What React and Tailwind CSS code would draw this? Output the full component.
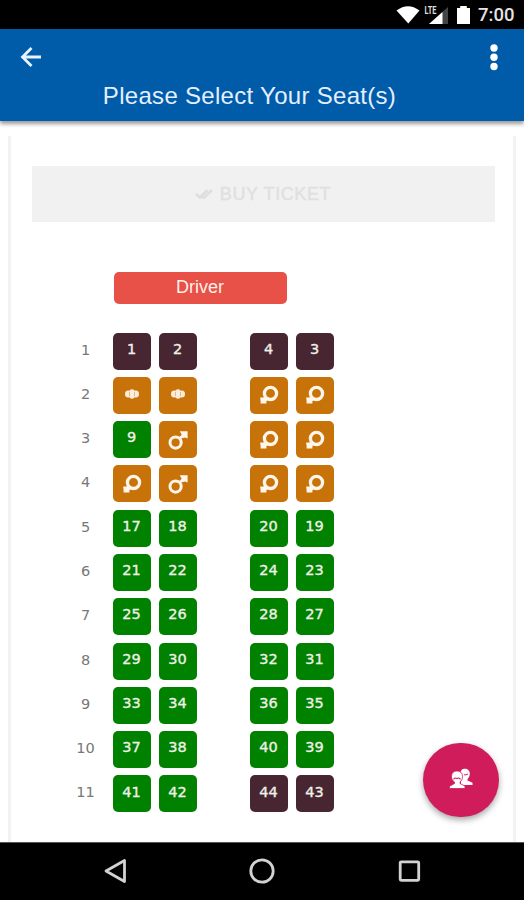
import React from 'react';

const ROWS = [
  { row: 1, seats: [{ label: '1', type: 'blocked' }, { label: '2', type: 'blocked' }, { label: '4', type: 'blocked' }, { label: '3', type: 'blocked' }] },
  { row: 2, seats: [{ icon: 'group', type: 'sold' }, { icon: 'group', type: 'sold' }, { icon: 'female', type: 'sold' }, { icon: 'female', type: 'sold' }] },
  { row: 3, seats: [{ label: '9', type: 'free' }, { icon: 'male', type: 'sold' }, { icon: 'female', type: 'sold' }, { icon: 'female', type: 'sold' }] },
  { row: 4, seats: [{ icon: 'female', type: 'sold' }, { icon: 'male', type: 'sold' }, { icon: 'female', type: 'sold' }, { icon: 'female', type: 'sold' }] },
  { row: 5, seats: [{ label: '17', type: 'free' }, { label: '18', type: 'free' }, { label: '20', type: 'free' }, { label: '19', type: 'free' }] },
  { row: 6, seats: [{ label: '21', type: 'free' }, { label: '22', type: 'free' }, { label: '24', type: 'free' }, { label: '23', type: 'free' }] },
  { row: 7, seats: [{ label: '25', type: 'free' }, { label: '26', type: 'free' }, { label: '28', type: 'free' }, { label: '27', type: 'free' }] },
  { row: 8, seats: [{ label: '29', type: 'free' }, { label: '30', type: 'free' }, { label: '32', type: 'free' }, { label: '31', type: 'free' }] },
  { row: 9, seats: [{ label: '33', type: 'free' }, { label: '34', type: 'free' }, { label: '36', type: 'free' }, { label: '35', type: 'free' }] },
  { row: 10, seats: [{ label: '37', type: 'free' }, { label: '38', type: 'free' }, { label: '40', type: 'free' }, { label: '39', type: 'free' }] },
  { row: 11, seats: [{ label: '41', type: 'free' }, { label: '42', type: 'free' }, { label: '44', type: 'blocked' }, { label: '43', type: 'blocked' }] },
];

const SEAT_COLORS = {
  free: 'bg-[#008100]',
  sold: 'bg-[#c87309]',
  blocked: 'bg-[#472632]',
};

function SeatIcon({ name }) {
  if (name === 'male') {
    return (
      <svg className="w-6 h-6" viewBox="0 0 24 24" fill="none">
        <circle cx="9.6" cy="14.6" r="5.6" stroke="#fff5ea" strokeWidth="3" />
        <path d="M13.4 10.800 17 7.400" stroke="#fff5ea" strokeWidth="2.6" />
        <path d="M13.8 3.2h7.800v7.4l-2.6-1.200-2.800.8-.4-3.200z" fill="#fff5ea" />
      </svg>
    );
  }
  if (name === 'female') {
    return (
      <svg className="w-6 h-6" viewBox="0 0 24 24" fill="none">
        <circle cx="13.5" cy="10.400" r="6.100" stroke="#fff5ea" strokeWidth="3.300" />
        <path d="M3.200 14.600h2.800l3.200-1 1.400 3-1.200 2v1.800H3.600v-2.200z" fill="#fff5ea" />
      </svg>
    );
  }
  return (
    <svg className="w-6 h-6" viewBox="0 0 24 24">
      <g fill="#ffeddb">
        <ellipse cx="8.200" cy="11" rx="3.200" ry="3.500" />
        <ellipse cx="15.800" cy="11" rx="3.200" ry="3.500" />
        <ellipse cx="12" cy="11" rx="3.200" ry="4.800" />
      </g>
      <path d="M9.500 9v4M14.500 9v4" stroke="#dfa765" strokeWidth=".8" />
    </svg>
  );
}

function Seat({ seat }) {
  return (
    <div className={`flex h-[37px] w-[38px] items-center justify-center rounded-[5px] font-['DejaVu_Sans',sans-serif] text-[14.5px] text-[#f0f0e8] ${SEAT_COLORS[seat.type]}`}>
      {seat.icon ? <SeatIcon name={seat.icon} /> : <span className="-mt-[3px] [-webkit-text-stroke:0.35px]">{seat.label}</span>}
    </div>
  );
}

function SeatRow({ row, seats }) {
  return (
    <div className="flex h-[44.3px]">
      <div className="mr-[9px] h-[34px] w-[36px] text-center font-['DejaVu_Sans',sans-serif] text-[14.5px] leading-[34px] text-[#777]">{row}</div>
      <div className="flex gap-[8px]">
        <Seat seat={seats[0]} />
        <Seat seat={seats[1]} />
      </div>
      <div className="ml-[53px] flex gap-[8px]">
        <Seat seat={seats[2]} />
        <Seat seat={seats[3]} />
      </div>
    </div>
  );
}

function StatusBar() {
  return (
    <div className="flex h-[29px] items-center bg-black pl-[396px]">
      <svg className="h-[29px] w-[80px]" viewBox="0 0 80 29">
        <path d="M.5 10.5Q12 2 23.500 10.500L12.300 23.500z" fill="#fff" />
        <path d="M52 7v17H33z" fill="#444" />
        <path d="M46.500 12v12H33z" fill="#fff" />
        <text x="28.500" y="14" fontSize="10" fontWeight="700" textLength="12" lengthAdjust="spacingAndGlyphs" fill="#ddd" fontFamily="Roboto, sans-serif">LTE</text>
        <path d="M61 8h3.200V6h6.600v2H74v16H61z" fill="#fff" />
      </svg>
      <span className="ml-[2px] mt-[2px] font-[Roboto,sans-serif] text-[18.5px] font-medium leading-none text-[#e4e4e4]">7:00</span>
    </div>
  );
}

function Header() {
  return (
    <header className="relative z-10 h-[92px] bg-[#005ba9] shadow-[0_3px_4px_rgba(0,0,0,0.4)]">
      <div className="flex h-[55px] items-center justify-between pl-[20px] pr-[26px]">
        <svg className="h-[22px] w-[22px]" viewBox="0 0 22 22" fill="none" stroke="#e9f3ff" strokeWidth="2.800">
          <path d="M21 11H2.500M11.500 2 2.500 11l9 9" />
        </svg>
        <svg className="h-[28px] w-[8px]" viewBox="0 0 8 28" fill="#fff">
          <circle cx="4" cy="5" r="3.700" />
          <circle cx="4" cy="14.200" r="3.700" />
          <circle cx="4" cy="23.500" r="3.700" />
        </svg>
      </div>
      <h1 className="-mt-[3px] pr-[25px] text-center text-[24px] leading-[30px] tracking-[0.3px] text-[#e4efff]">Please Select Your Seat(s)</h1>
    </header>
  );
}

function NavBar() {
  return (
    <nav className="flex h-[58px] items-center justify-between border-t border-[#555] bg-black pb-[2px] pl-[101px] pr-[101px]">
      <svg className="h-7 w-7" viewBox="0 0 28 28" fill="none" stroke="#d2d2d2" strokeWidth="2.800">
        <path d="M23.500 3.500v21L5 14z" strokeLinejoin="round" />
      </svg>
      <svg className="h-7 w-7" viewBox="0 0 28 28" fill="none" stroke="#d2d2d2" strokeWidth="2.800">
        <circle cx="14" cy="14" r="11.200" />
      </svg>
      <svg className="h-7 w-7" viewBox="0 0 28 28" fill="none" stroke="#d2d2d2" strokeWidth="2.800">
        <rect x="5.200" y="4.800" width="18.500" height="18.500" rx="1" />
      </svg>
    </nav>
  );
}

function App() {
  return (
    <div className="flex h-[900px] w-[524px] flex-col overflow-hidden bg-white font-['Liberation_Sans',Arial,sans-serif]">
      <StatusBar />
      <Header />
      <main className="relative flex-1 px-[8px] pt-[15px]">
        <section className="h-full border-x-[3px] border-[#f2f2f2] px-[20.500px] pt-[30px]">
          <button className="flex h-[56px] w-[463px] items-center justify-center bg-[#f1f1f1] text-[18px] tracking-[0.6px] text-[#e0e0e0]">
            <svg className="mr-[7px] h-[14px] w-[18px]" viewBox="0 0 18 14" fill="none" stroke="#dedede" strokeWidth="2.600">
              <path d="m1 7 4 3.500L12.500 3M7 10.300l2 .4L17 3" />
            </svg>
            <span className="[-webkit-text-stroke:0.4px]">BUY TICKET</span>
          </button>
          <div className="ml-[82px] mt-[50px] h-[32px] w-[173px] rounded-[5px] bg-[#e75147] text-center text-[18px] leading-[31px] text-[#fff0ea]">Driver</div>
          <div className="ml-[36px] mt-[28.500px]">
            {ROWS.map((item) => (
              <SeatRow key={item.row} row={item.row} seats={item.seats} />
            ))}
          </div>
        </section>
        <button className="absolute bottom-[25px] right-[25px] flex h-[74px] w-[76px] items-center justify-center rounded-full bg-[#d01c5b] shadow-[0_3px_6px_rgba(0,0,0,0.35)]">
          <svg className="h-[24px] w-[26px]" viewBox="0 0 26 24">
            <path d="M12.500 5.500C12.500 2 14.500 .8 17 .8s4.800 1.700 4.800 4.700c0 2.500-1 4.500-2.300 5.500v1.500l5 2.300V17H13z" fill="#fff" />
            <path d="M3.500 8.500C3.500 5 5.500 3 9 3s5.500 2 5.500 5.500c0 2.500-1 4.500-2.500 5.500v1.500l5 2.500v2.500H1.500v-2.200L6.500 15.500V14C4.500 13 3.500 11 3.500 8.500z" fill="#fff" stroke="#d01c5b" strokeWidth=".8" />
            <path d="M5.500 11.300Q7 9.300 9 10.500q2-1.200 3.500.8" fill="none" stroke="#d01c5b" strokeWidth="1.100" />
            <path d="M16 6.800q2 .4 4-.8" fill="none" stroke="#d01c5b" strokeWidth="1" />
          </svg>
        </button>
      </main>
      <NavBar />
    </div>
  );
}

export default App;
